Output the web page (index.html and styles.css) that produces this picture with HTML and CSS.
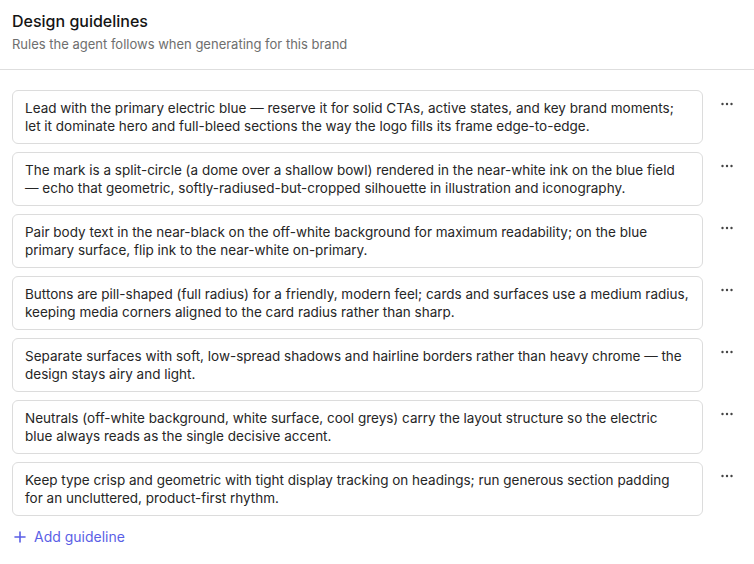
FILE: index.html
```html
<!DOCTYPE html>
<html>
<head>
<meta charset="utf-8">
<link rel="stylesheet" href="styles.css">
</head>
<body>
<header class="head">
  <h1 class="title">Design guidelines</h1>
  <p class="subtitle">Rules the agent follows when generating for this brand</p>
</header>
<section class="list">
  <div class="row"><div class="card">Lead with the primary electric blue — reserve it for solid CTAs, active states, and key brand moments;<br>let it dominate hero and full-bleed sections the way the logo fills its frame edge-to-edge.</div><button class="more"><svg width="12" height="4" viewBox="0 0 12 4"><circle cx="1.5" cy="2" r="1.2"/><circle cx="6" cy="2" r="1.2"/><circle cx="10.5" cy="2" r="1.2"/></svg></button></div>
  <div class="row"><div class="card">The mark is a split-circle (a dome over a shallow bowl) rendered in the near-white ink on the blue field<br>— echo that geometric, softly-radiused-but-cropped silhouette in illustration and iconography.</div><button class="more"><svg width="12" height="4" viewBox="0 0 12 4"><circle cx="1.5" cy="2" r="1.2"/><circle cx="6" cy="2" r="1.2"/><circle cx="10.5" cy="2" r="1.2"/></svg></button></div>
  <div class="row"><div class="card">Pair body text in the near-black on the off-white background for maximum readability; on the blue<br>primary surface, flip ink to the near-white on-primary.</div><button class="more"><svg width="12" height="4" viewBox="0 0 12 4"><circle cx="1.5" cy="2" r="1.2"/><circle cx="6" cy="2" r="1.2"/><circle cx="10.5" cy="2" r="1.2"/></svg></button></div>
  <div class="row"><div class="card">Buttons are pill-shaped (full radius) for a friendly, modern feel; cards and surfaces use a medium radius,<br>keeping media corners aligned to the card radius rather than sharp.</div><button class="more"><svg width="12" height="4" viewBox="0 0 12 4"><circle cx="1.5" cy="2" r="1.2"/><circle cx="6" cy="2" r="1.2"/><circle cx="10.5" cy="2" r="1.2"/></svg></button></div>
  <div class="row"><div class="card">Separate surfaces with soft, low-spread shadows and hairline borders rather than heavy chrome — the<br>design stays airy and light.</div><button class="more"><svg width="12" height="4" viewBox="0 0 12 4"><circle cx="1.5" cy="2" r="1.2"/><circle cx="6" cy="2" r="1.2"/><circle cx="10.5" cy="2" r="1.2"/></svg></button></div>
  <div class="row"><div class="card">Neutrals (off-white background, white surface, cool greys) carry the layout structure so the electric<br>blue always reads as the single decisive accent.</div><button class="more"><svg width="12" height="4" viewBox="0 0 12 4"><circle cx="1.5" cy="2" r="1.2"/><circle cx="6" cy="2" r="1.2"/><circle cx="10.5" cy="2" r="1.2"/></svg></button></div>
  <div class="row"><div class="card">Keep type crisp and geometric with tight display tracking on headings; run generous section padding<br>for an uncluttered, product-first rhythm.</div><button class="more"><svg width="12" height="4" viewBox="0 0 12 4"><circle cx="1.5" cy="2" r="1.2"/><circle cx="6" cy="2" r="1.2"/><circle cx="10.5" cy="2" r="1.2"/></svg></button></div>
  <button class="add"><svg width="12" height="12" viewBox="0 0 12 12"><path d="M6 1v10M1 6h10" stroke="currentColor" stroke-width="1.6" stroke-linecap="round"/></svg><span>Add guideline</span></button>
</section>
</body>
</html>
```

FILE: styles.css
```css
* { box-sizing: border-box; }
body {
  margin: 0;
  background: #fff;
  font-family: Inter, "Noto Sans", sans-serif;
  color: #222;
}
.head {
  padding: 11px 12px 16px;
  border-bottom: 1px solid #dedede;
}
.title {
  margin: 0;
  font-size: 16px;
  font-weight: 500;
  line-height: 20px;
  color: #141414;
}
.subtitle {
  margin: 4px 0 0;
  font-size: 13px;
  line-height: 18px;
  color: #6e6e6e;
}
.list {
  padding: 20px 0 0 12px;
  display: flex;
  flex-direction: column;
  gap: 8px;
}
.row {
  display: flex;
  gap: 8px;
  align-items: flex-start;
}
.card {
  width: 691px;
  border: 1px solid #dcdcdc;
  border-radius: 6px;
  padding: 8px 6px 8px 12px;
  font-size: 13.5px;
  line-height: 18px;
  color: #262626;
}
.more {
  width: 32px;
  height: 28px;
  border: 0;
  background: none;
  padding: 0;
  display: flex;
  align-items: center;
  justify-content: center;
  fill: #444;
}
.add {
  display: flex;
  align-items: center;
  gap: 8px;
  border: 0;
  background: none;
  padding: 4px 2px;
  margin-top: 0;
  color: #5b5fe6;
  font-family: inherit;
  font-size: 14px;
  align-self: flex-start;
}
```
